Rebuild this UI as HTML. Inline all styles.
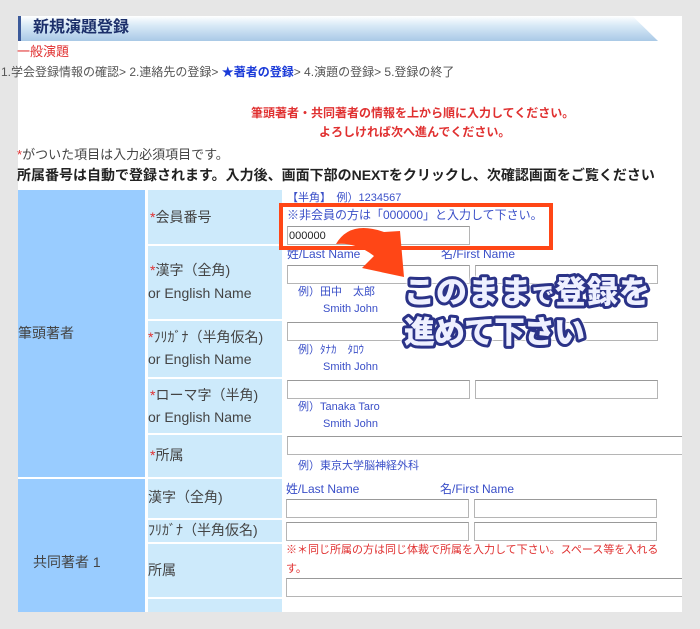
<!DOCTYPE html>
<html><head><meta charset="utf-8"><style>
*{margin:0;padding:0;box-sizing:border-box}
body{width:700px;height:629px;background:#e6e6e6;position:relative;overflow:hidden;font-family:"Liberation Sans","Noto Sans CJK JP",sans-serif;color:#333}
.a{position:absolute;white-space:nowrap;line-height:1}
.panel{position:absolute;left:18px;top:16px;width:664px;height:596px;background:#fff}
.hdr{position:absolute;left:18px;top:16px;width:640px;height:25px;background:linear-gradient(#fff,#d6e8f6 40%,#a9c9e6);border-left:3px solid #3c5a9a;clip-path:polygon(0 0,96% 0,100% 100%,0 100%)}
.c1{position:absolute;left:18px;width:127px;background:#99ccff}
.c2{position:absolute;left:148px;width:134px;background:#cdeafb}
.in{position:absolute;height:19px;border:1px solid #b5b5b5;border-top-color:#999;background:#fff}
.bl{color:#3a4fc8;font-size:11px}
.lb{font-size:14px;color:#444}
.r{color:#e03030}
</style></head><body>
<div class="panel"></div>
<div class="hdr"></div>
<div class="a" style="left:33px;top:20px;font-size:16px;font-weight:bold;color:#1c2f6a">新規演題登録</div>
<div class="a r" style="left:17px;top:45px;font-size:13px">一般演題</div>
<div class="a" style="left:1px;top:66px;font-size:12px;color:#555">1.学会登録情報の確認&gt; 2.連絡先の登録&gt; <b style="color:#1a3ad8">★著者の登録</b>&gt; 4.演題の登録&gt; 5.登録の終了</div>
<div class="a r" style="left:251px;top:107px;font-size:12px;font-weight:bold">筆頭著者・共同著者の情報を上から順に入力してください。</div>
<div class="a r" style="left:319px;top:126px;font-size:12px;font-weight:bold">よろしければ次へ進んでください。</div>
<div class="a" style="left:17px;top:148px;font-size:13px;color:#444"><span class="r">*</span>がついた項目は入力必須項目です。</div>
<div class="a" style="left:17px;top:168px;font-size:14px;font-weight:bold;color:#222">所属番号は自動で登録されます。入力後、画面下部のNEXTをクリックし、次確認画面をご覧ください</div>

<div class="c1" style="top:190px;height:287px"></div>
<div class="c1" style="top:479px;height:133px"></div>
<div class="c2" style="top:190px;height:54px"></div>
<div class="c2" style="top:246px;height:73px"></div>
<div class="c2" style="top:321px;height:56px"></div>
<div class="c2" style="top:379px;height:54px"></div>
<div class="c2" style="top:435px;height:42px"></div>
<div class="c2" style="top:479px;height:39px"></div>
<div class="c2" style="top:520px;height:22px"></div>
<div class="c2" style="top:544px;height:53px"></div>
<div class="c2" style="top:599px;height:13px"></div>

<div class="a lb" style="left:18px;top:326px">筆頭著者</div>
<div class="a lb" style="left:33px;top:555px">共同著者 1</div>
<div class="a lb" style="left:150px;top:210px"><span class="r">*</span>会員番号</div>
<div class="a lb" style="left:150px;top:263px"><span class="r">*</span>漢字（全角)</div>
<div class="a lb" style="left:148px;top:286px">or English Name</div>
<div class="a lb" style="left:148px;top:330px"><span class="r">*</span>ﾌﾘｶﾞﾅ（半角仮名)</div>
<div class="a lb" style="left:148px;top:352px">or English Name</div>
<div class="a lb" style="left:150px;top:388px"><span class="r">*</span>ローマ字（半角)</div>
<div class="a lb" style="left:148px;top:410px">or English Name</div>
<div class="a lb" style="left:150px;top:448px"><span class="r">*</span>所属</div>
<div class="a lb" style="left:148px;top:490px">漢字（全角)</div>
<div class="a lb" style="left:148px;top:523px">ﾌﾘｶﾞﾅ（半角仮名)</div>
<div class="a lb" style="left:148px;top:563px">所属</div>

<div class="a bl" style="left:287px;top:193px">【半角】　例）1234567</div>
<div class="a bl" style="left:287px;top:209px;font-size:12px">※非会員の方は「000000」と入力して下さい。</div>
<div class="in" style="left:287px;top:226px;width:183px"><span style="font-size:11px;position:absolute;left:1px;top:3px;color:#222">000000</span></div>
<div class="a bl" style="left:287px;top:248px;font-size:12px">姓/Last Name</div>
<div class="a bl" style="left:441px;top:248px;font-size:12px">名/First Name</div>
<div class="in" style="left:287px;top:265px;width:183px"></div>
<div class="in" style="left:475px;top:265px;width:183px"></div>
<div class="a bl" style="left:298px;top:287px">例）田中　太郎</div>
<div class="a bl" style="left:323px;top:304px">Smith John</div>
<div class="in" style="left:287px;top:322px;width:371px"></div>
<div class="a bl" style="left:298px;top:345px">例）ﾀﾅｶ　ﾀﾛｳ</div>
<div class="a bl" style="left:323px;top:362px">Smith John</div>
<div class="in" style="left:287px;top:380px;width:183px"></div>
<div class="in" style="left:475px;top:380px;width:183px"></div>
<div class="a bl" style="left:298px;top:402px">例）Tanaka Taro</div>
<div class="a bl" style="left:323px;top:419px">Smith John</div>
<div class="in" style="left:287px;top:436px;width:400px"></div>
<div class="a bl" style="left:298px;top:461px">例）東京大学脳神経外科</div>
<div class="a bl" style="left:286px;top:483px;font-size:12px">姓/Last Name</div>
<div class="a bl" style="left:440px;top:483px;font-size:12px">名/First Name</div>
<div class="in" style="left:286px;top:499px;width:183px"></div>
<div class="in" style="left:474px;top:499px;width:183px"></div>
<div class="in" style="left:286px;top:522px;width:183px"></div>
<div class="in" style="left:474px;top:522px;width:183px"></div>
<div class="a r" style="left:286px;top:545px;font-size:11px">※＊同じ所属の方は同じ体裁で所属を入力して下さい。スペース等を入れる</div>
<div class="a r" style="left:286px;top:564px;font-size:11px">す。</div>
<div class="in" style="left:286px;top:578px;width:400px"></div>
<div style="position:absolute;left:682px;top:0;width:18px;height:629px;background:#e6e6e6"></div>

<div style="position:absolute;left:279px;top:203px;width:274px;height:47px;border:4px solid #ff4616"></div>
<svg style="position:absolute;left:0;top:0" width="700" height="629">
<path d="M336 244 Q350 220 384 232 L400 231 L404 277 L362 268 L374 256 Q356 242 336 244 Z" fill="#ff4616"/>
<g font-family="'Noto Sans CJK JP',sans-serif" font-weight="900" fill="#eef0ff" stroke="#2b3388" stroke-width="6" paint-order="stroke" stroke-linejoin="round" style="filter:drop-shadow(0 0 1px #fff) drop-shadow(0 0 1px #fff)">
<text x="404" y="303" font-size="31" letter-spacing="1">このまま<tspan font-size="22">で</tspan>登録を</text>
<text x="404" y="343" font-size="31" letter-spacing="-1">進めて下さい</text>
</g>
</svg>
</body></html>
